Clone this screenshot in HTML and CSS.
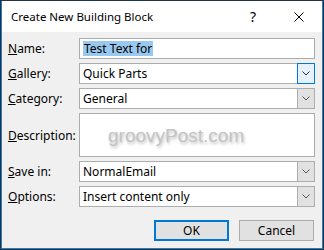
FILE: index.html
```html
<!DOCTYPE html>
<html lang="en">
<head>
    <meta charset="UTF-8">
    <title>Create New Building Block</title>
    <link rel="stylesheet" href="styles.css">
</head>
<body>
    <div class="window">
        <div class="frame">
            <div class="titlebar">
                <span class="title">Create New Building Block</span>
                <span class="caption-btn">?</span>
                <span class="caption-btn">
                    <svg width="10" height="10" viewBox="0 0 10 10"><path d="M0.5 0.5 L9.5 9.5 M9.5 0.5 L0.5 9.5" stroke="#000" stroke-width="1"/></svg>
                </span>
            </div>

            <div class="content">
                <div class="form">
                    <label class="lbl"><u>N</u>ame:</label>
                    <div class="field"><span class="selected">Test Text for</span></div>

                    <label class="lbl"><u>G</u>allery:</label>
                    <div class="field select">
                        <span class="value">Quick Parts</span>
                        <span class="drop focused"><svg width="8" height="5" viewBox="0 0 8 5"><path d="M0.5 0.5 L4 4 L7.5 0.5" fill="none" stroke="#333"/></svg></span>
                    </div>

                    <label class="lbl"><u>C</u>ategory:</label>
                    <div class="field select">
                        <span class="value">General</span>
                        <span class="drop"><svg width="8" height="5" viewBox="0 0 8 5"><path d="M0.5 0.5 L4 4 L7.5 0.5" fill="none" stroke="#555"/></svg></span>
                    </div>

                    <label class="lbl"><u>D</u>escription:</label>
                    <div class="field desc"><span class="watermark">groovyPost.com</span></div>

                    <label class="lbl"><u>S</u>ave in:</label>
                    <div class="field select">
                        <span class="value">NormalEmail</span>
                        <span class="drop"><svg width="8" height="5" viewBox="0 0 8 5"><path d="M0.5 0.5 L4 4 L7.5 0.5" fill="none" stroke="#555"/></svg></span>
                    </div>

                    <label class="lbl"><u>O</u>ptions:</label>
                    <div class="field select">
                        <span class="value">Insert content only</span>
                        <span class="drop"><svg width="8" height="5" viewBox="0 0 8 5"><path d="M0.5 0.5 L4 4 L7.5 0.5" fill="none" stroke="#555"/></svg></span>
                    </div>
                </div>

                <div class="buttons">
                    <button class="btn default">OK</button>
                    <button class="btn">Cancel</button>
                </div>
            </div>
        </div>
    </div>
</body>
</html>
```

FILE: styles.css
```css
html, body {
    margin: 0;
    padding: 0;
}

body {
    font-family: "Noto Sans", "DejaVu Sans", sans-serif;
    font-size: 12px;
    color: #000;
}

/* window frame */
.window {
    width: 324px;
    height: 250px;
    box-sizing: border-box;
    border: 1px solid #1f3547;
    display: flex;
}

.frame {
    flex: 1;
    display: flex;
    flex-direction: column;
    border: 1px solid #2b7dbd;
    border-top: none;
}

.titlebar {
    height: 31px;
    background: #fff;
    display: flex;
    align-items: center;
    padding-left: 9px;
}

.titlebar .title {
    flex: 1;
    font-size: 11.5px;
}

.caption-btn {
    width: 46px;
    height: 31px;
    display: flex;
    align-items: center;
    justify-content: center;
    font-size: 14px;
}

/* dialog content */
.content {
    flex: 1;
    background: #f0f0f0;
    padding: 6px 7px 0 6px;
}

.form {
    display: grid;
    grid-template-columns: 71px 1fr;
    grid-template-rows: 21px 21px 21px 44px 21px 21px;
    row-gap: 4px;
}

.form .lbl {
    align-self: center;
}

.field {
    box-sizing: border-box;
    background: #fff;
    border: 1px solid #adadad;
    display: flex;
    align-items: center;
    padding-left: 3px;
    white-space: nowrap;
}

.field .selected {
    background: #99c9ef;
    padding: 0 1px;
    line-height: 15px;
}

.field.select .value {
    flex: 1;
}

.field .drop {
    box-sizing: border-box;
    width: 18px;
    align-self: stretch;
    margin: -1px -1px -1px 0;
    background: #e1e1e1;
    border: 1px solid #adadad;
    display: flex;
    align-items: center;
    justify-content: center;
}

.field .drop.focused {
    background: #e5f1fb;
    border-color: #0078d7;
}

.field.desc {
    padding-left: 28px;
    padding-top: 2px;
}

.watermark {
    font-family: "Liberation Sans", Arial, sans-serif;
    font-size: 19px;
    color: #c4c4c4;
    text-shadow: 1px 2px 3px rgba(0, 0, 0, 0.25);
}

/* buttons */
.buttons {
    display: flex;
    justify-content: flex-end;
    gap: 10px;
    margin-top: 13px;
    margin-right: 1px;
}

.btn {
    box-sizing: border-box;
    width: 75px;
    height: 21px;
    font-family: inherit;
    font-size: 12px;
    background: #e1e1e1;
    border: 1px solid #adadad;
    padding: 0;
}

.btn.default {
    border: 2px solid #0078d7;
}
```
